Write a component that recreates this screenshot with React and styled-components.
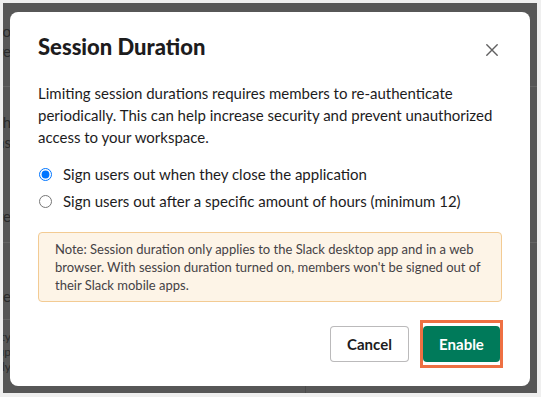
import React from "react";
import styled, { createGlobalStyle } from "styled-components";

const GlobalStyle = createGlobalStyle`
  html, body { margin: 0; padding: 0; background: #efefef; }
  body { font-family: Lato, "Noto Sans", Arial, sans-serif; -webkit-font-smoothing: antialiased; }
  * { box-sizing: border-box; }
`;

const Page = styled.div`
  width: 541px;
  height: 397px;
  padding: 3px 4px 4px 3px;
  background: #efefef;
`;

const Backdrop = styled.div`
  position: relative;
  height: 390px;
  background: #575757;
  overflow: hidden;
  display: flex;
  flex-direction: column;
`;

const Section = styled.div`
  display: flex;
  flex-direction: column;
  height: ${(p) => p.$h}px;
  padding-top: ${(p) => p.$pt || 0}px;
  border-bottom: ${(p) => (p.$line ? "1px solid #666" : "none")};
  flex-shrink: 0;
`;

const SplitSection = styled.div`
  flex: 1;
  display: grid;
  grid-template-columns: 303px 1fr;
`;

const LeftColumn = styled.div`
  display: flex;
  flex-direction: column;
  border-right: 1px solid #4a4a4a;
`;

const Fragment = styled.div`
  width: 8px;
  display: flex;
  justify-content: flex-end;
  overflow: hidden;
  white-space: nowrap;
  font-size: ${(p) => p.$fs || 15}px;
  line-height: ${(p) => p.$lh || 20}px;
  margin-top: ${(p) => p.$mt || 0}px;
  color: #2a2a2a;
`;

const Modal = styled.div`
  position: absolute;
  left: 7px;
  top: 9px;
  width: 520px;
  background: #fff;
  border-radius: 8px;
  display: flex;
  flex-direction: column;
  color: #1d1c1d;
`;

const Header = styled.div`
  display: flex;
  justify-content: space-between;
  align-items: flex-start;
  height: 70px;
  padding: 20px 20px 0 28px;
`;

const Title = styled.h1`
  margin: 0;
  font-size: 22px;
  line-height: 30px;
  font-weight: 900;
  color: #1d1c1d;
`;

const CloseButton = styled.button`
  width: 36px;
  height: 36px;
  border: none;
  background: transparent;
  padding: 0;
  display: flex;
  align-items: center;
  justify-content: center;
  cursor: pointer;
`;

const Body = styled.div`
  padding: 0 28px;
  display: flex;
  flex-direction: column;
`;

const Paragraph = styled.p`
  margin: 0 0 15px;
  font-size: 15px;
  line-height: 22px;
  color: #1d1c1d;
`;

const RadioRow = styled.label`
  display: flex;
  align-items: center;
  gap: 11px;
  height: 22px;
  margin-bottom: 5px;
  font-size: 15px;
  line-height: 22px;
  color: #1d1c1d;
  cursor: pointer;
`;

const Radio = styled.input`
  width: 13px;
  height: 13px;
  margin: 0 0 0 1px;
`;

const Note = styled.div`
  margin-top: 15px;
  border: 1px solid #f3cb93;
  background: #fdf4e7;
  border-radius: 4px;
  padding: 7px 16px;
  font-size: 13px;
  line-height: 18px;
  color: #454245;
`;

const Footer = styled.div`
  display: flex;
  justify-content: flex-end;
  align-items: center;
  gap: 11px;
  padding: 18px 27px 18px 28px;
`;

const Button = styled.button`
  height: 36px;
  padding: 0 ${(p) => (p.$primary ? 15 : 14)}px;
  border-radius: 4px;
  font-family: Lato, "Noto Sans", Arial, sans-serif;
  font-size: 15px;
  font-weight: 700;
  cursor: pointer;
  border: ${(p) => (p.$primary ? "none" : "1px solid rgba(29, 28, 29, 0.3)")};
  background: ${(p) => (p.$primary ? "#007a5a" : "#fff")};
  color: ${(p) => (p.$primary ? "#fff" : "#1d1c1d")};
  min-width: ${(p) => (p.$primary ? 77 : 79)}px;
`;

const Highlight = styled.div`
  display: flex;
  border: 3px solid #ee7043;
  padding: 3px 0;
`;

export default function App() {
  return (
    <>
      <GlobalStyle />
      <Page>
        <Backdrop>
          <Section $h={84} $pt={18} $line>
            <Fragment>Who</Fragment>
            <Fragment>More</Fragment>
          </Section>
          <Section $h={156} $pt={25} $line>
            <Fragment>Each</Fragment>
            <Fragment>has</Fragment>
            <Fragment $mt={54}>here</Fragment>
          </Section>
          <SplitSection>
            <LeftColumn>
              <Section $h={77} $pt={43} $line>
                <Fragment>type</Fragment>
              </Section>
              <Section $h={72} $pt={9}>
                <Fragment $fs={12} $lh={15}>entity</Fragment>
                <Fragment $fs={12} $lh={15}>up</Fragment>
                <Fragment $fs={12} $lh={15}>exactly</Fragment>
              </Section>
            </LeftColumn>
            <div />
          </SplitSection>

          <Modal role="dialog" aria-labelledby="session-title">
            <Header>
              <Title id="session-title">Session Duration</Title>
              <CloseButton aria-label="Close">
                <svg width="12" height="12" viewBox="0 0 12 12" fill="none">
                  <path d="M0.8 0.8 L11.2 11.2 M11.2 0.8 L0.8 11.2" stroke="#616061" strokeWidth="1.4" strokeLinecap="round" />
                </svg>
              </CloseButton>
            </Header>
            <Body>
              <Paragraph>
                Limiting session durations requires members to re-authenticate periodically. This can help increase security and prevent unauthorized access to your workspace.
              </Paragraph>
              <RadioRow>
                <Radio type="radio" name="duration" defaultChecked />
                Sign users out when they close the application
              </RadioRow>
              <RadioRow>
                <Radio type="radio" name="duration" />
                Sign users out after a specific amount of hours (minimum 12)
              </RadioRow>
              <Note>
                Note: Session duration only applies to the Slack desktop app and in a web browser. With session duration turned on, members won't be signed out of their Slack mobile apps.
              </Note>
            </Body>
            <Footer>
              <Button>Cancel</Button>
              <Highlight>
                <Button $primary>Enable</Button>
              </Highlight>
            </Footer>
          </Modal>
        </Backdrop>
      </Page>
    </>
  );
}
